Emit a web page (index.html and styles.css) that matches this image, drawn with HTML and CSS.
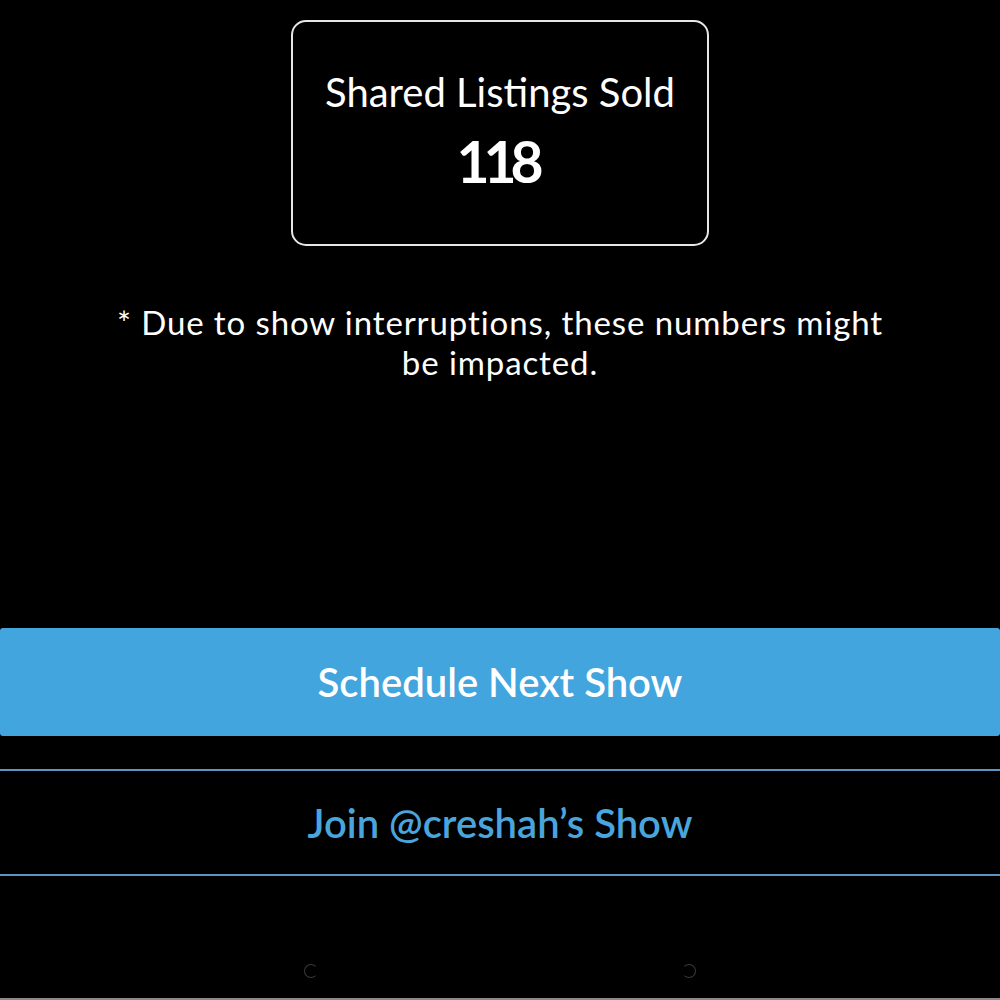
FILE: index.html
```html
<!DOCTYPE html>
<html lang="en">
<head>
  <meta charset="UTF-8" />
  <meta name="viewport" content="width=device-width, initial-scale=1.0" />
  <title>Show Summary</title>
  <link rel="stylesheet" href="styles.css">
</head>
<body>
  <div class="screen">
    <div class="stat-card">
      <div class="stat-label">Shared Listings Sold</div>
      <div class="stat-value">118</div>
    </div>

    <p class="note">* Due to show interruptions, these numbers might be impacted.</p>

    <div class="actions">
      <button class="btn btn-primary">Schedule Next Show</button>
      <button class="btn btn-outline">Join @creshah’s Show</button>
    </div>

    <div class="home-bar">
      <span class="cap cap-left"></span>
      <span class="cap cap-right"></span>
    </div>
  </div>
</body>
</html>
```

FILE: styles.css
```css
:root {
  --blue: #42a5de;
  --blue-text: #4aa5dc;
  --blue-line: #5b93c2;
}
body {
  margin: 0;
  background: #000;
  color: #fff;
  font-family: Lato, "Noto Sans", sans-serif;
}
.screen {
  height: 1000px;
  border-bottom: 2px solid #8a8a8a;
  display: flex;
  flex-direction: column;
  align-items: center;
  padding-top: 20px;
  box-sizing: border-box;
}
.stat-card {
  width: 418px;
  height: 226px;
  border: 2px solid #e6e6e6;
  border-radius: 15px;
  display: flex;
  flex-direction: column;
  align-items: center;
  padding-top: 46px;
  box-sizing: border-box;
}
.stat-label {
  font-size: 40px;
  line-height: 48px;
}
.stat-value {
  margin-top: 15px;
  font-size: 57px;
  line-height: 60px;
  font-weight: 700;
  letter-spacing: -6px;
  padding-right: 6px;
}
.note {
  margin: 56px 0 0;
  width: 775px;
  text-align: center;
  font-size: 33px;
  line-height: 40px;
  letter-spacing: 0.9px;
}
.actions {
  margin-top: 246px;
  width: 100%;
  display: flex;
  flex-direction: column;
  gap: 33px;
}
.btn {
  width: 100%;
  height: 108px;
  border: none;
  font-family: inherit;
  font-size: 40px;
  font-weight: 600;
  padding: 0;
  cursor: pointer;
}
.btn-primary {
  background: var(--blue);
  color: #fff;
  border-radius: 3px;
}
.btn-outline {
  height: 107px;
  background: #000;
  color: var(--blue-text);
  border-top: 2px solid var(--blue-line);
  border-bottom: 2px solid var(--blue-line);
}
.home-bar {
  margin-top: 88px;
  width: 392px;
  display: flex;
  justify-content: space-between;
}
.cap {
  width: 12px;
  height: 12px;
  border: 1.5px solid #3a3a3a;
  border-radius: 50%;
}
.cap-left { border-right-color: transparent; }
.cap-right { border-left-color: transparent; }
```
